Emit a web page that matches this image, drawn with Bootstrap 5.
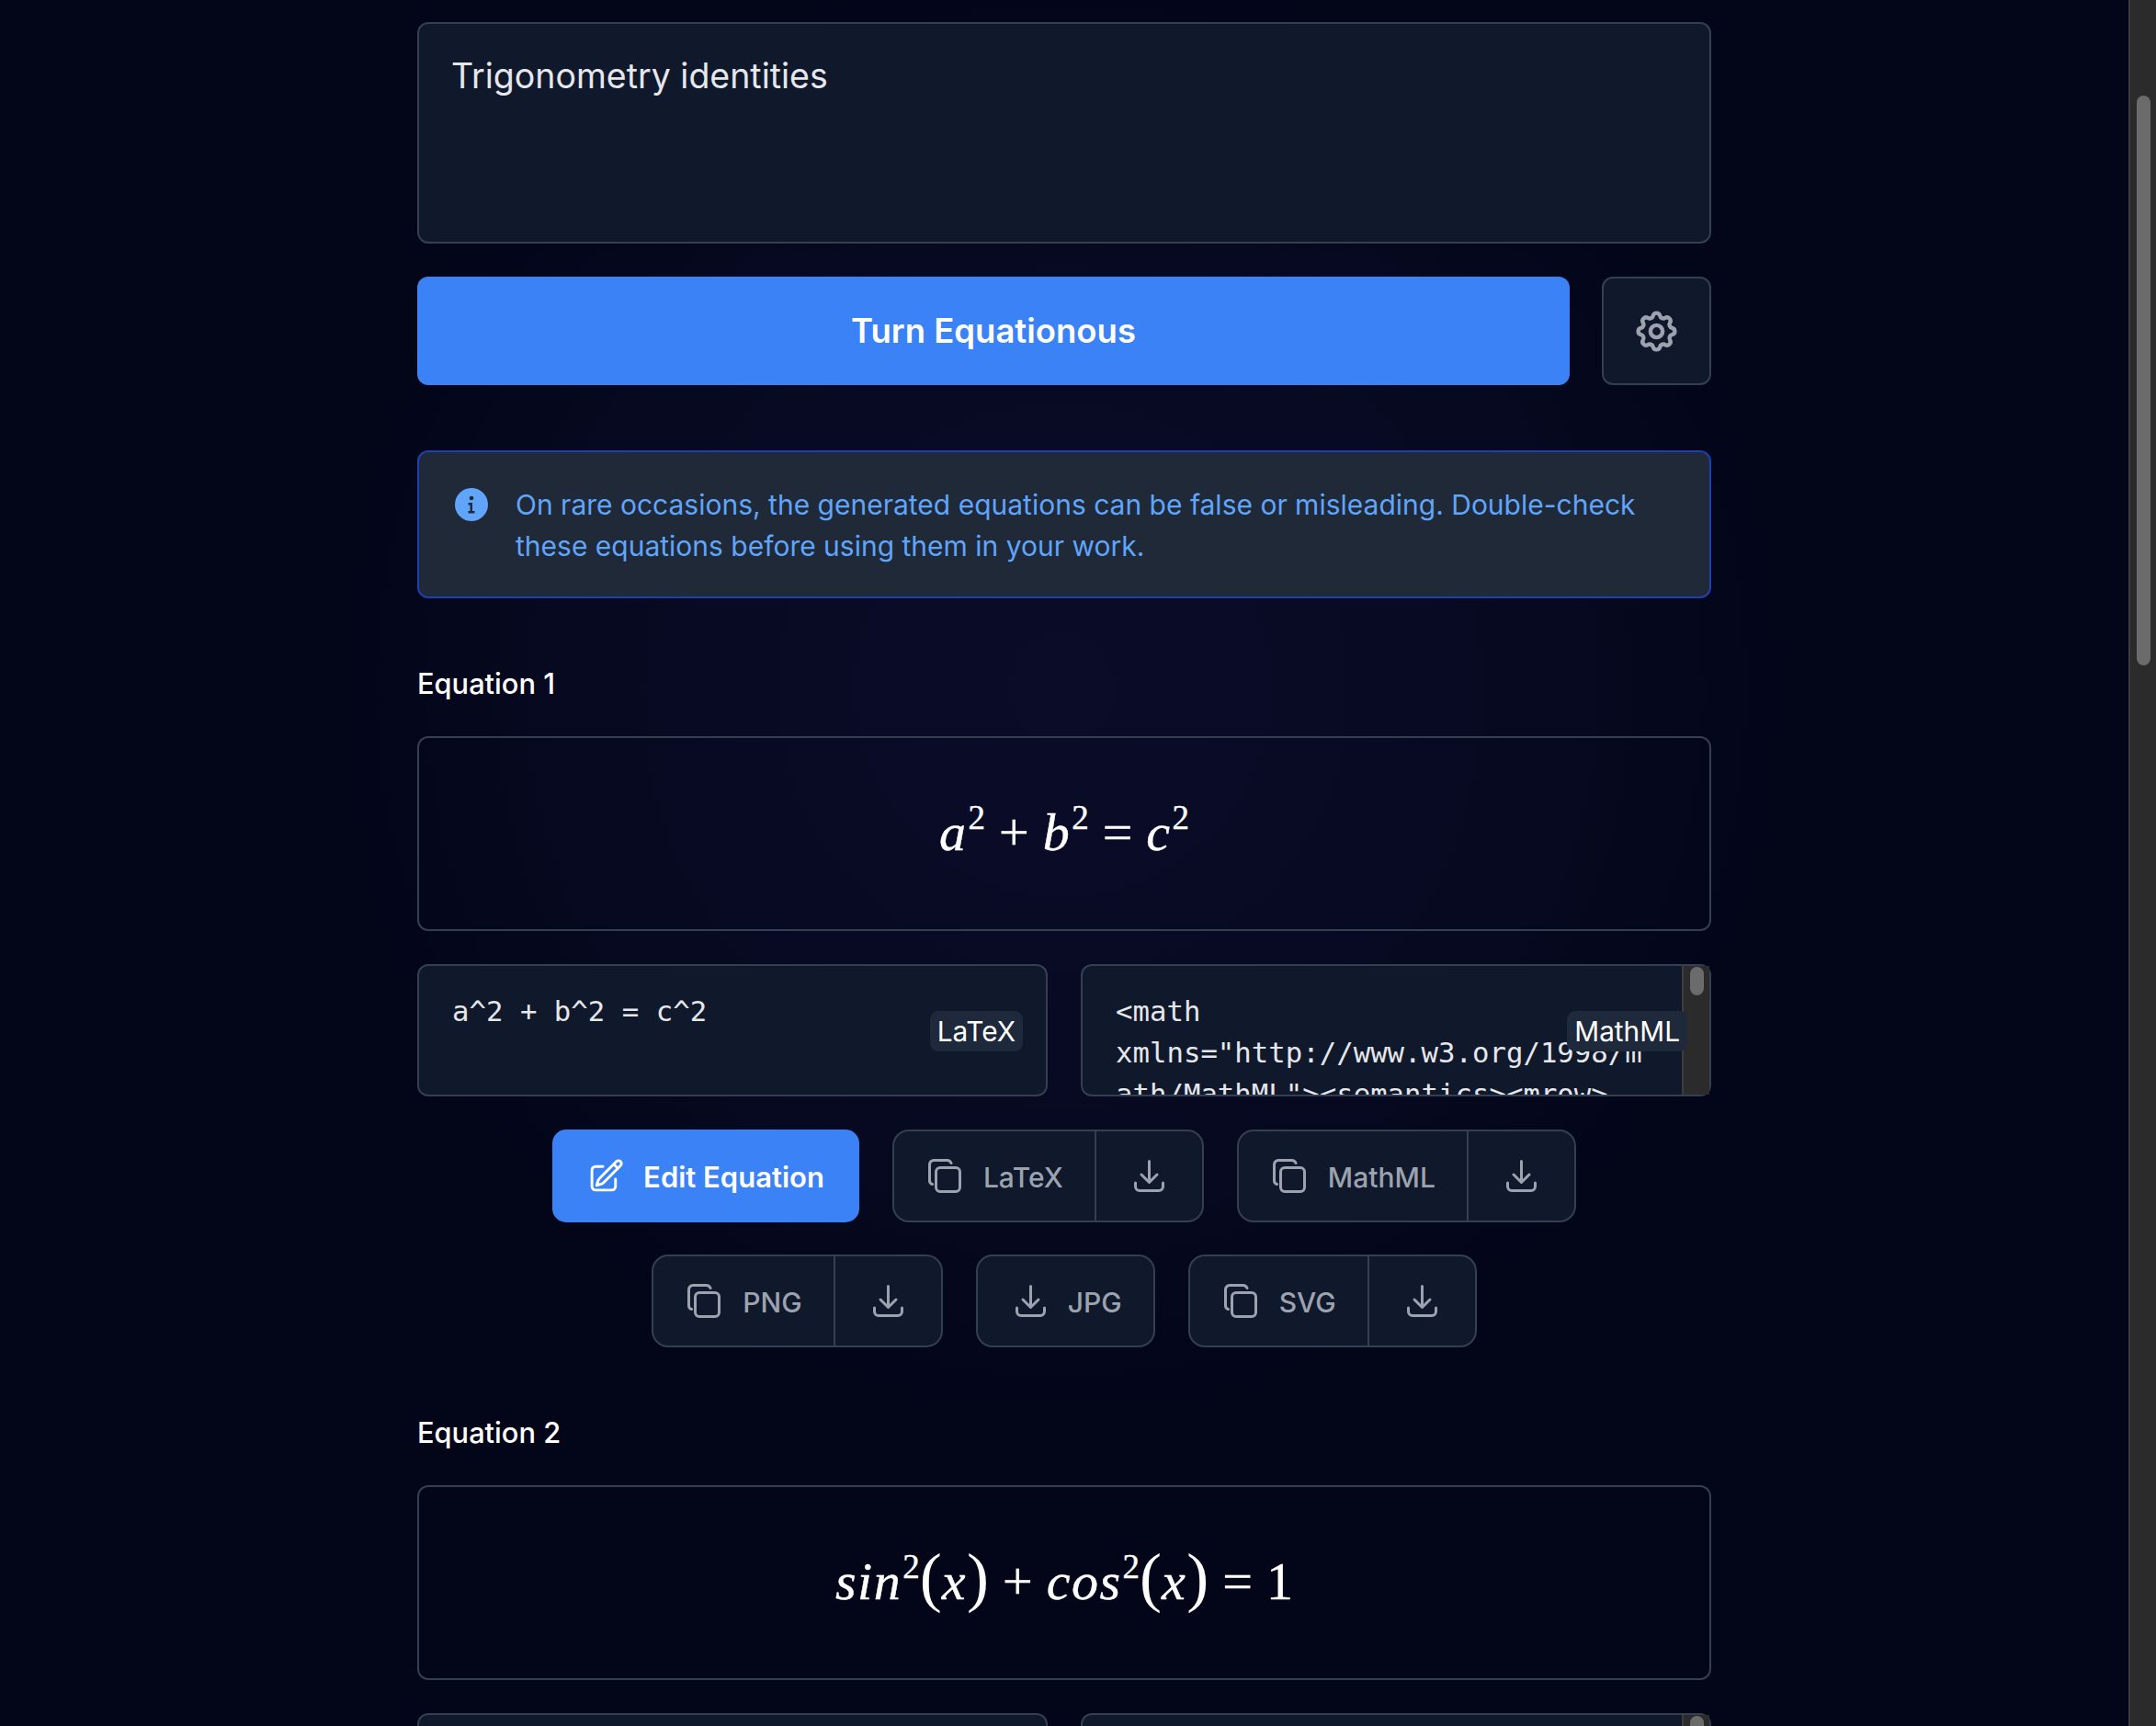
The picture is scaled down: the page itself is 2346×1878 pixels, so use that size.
<!DOCTYPE html>
<html lang="en">
<head>
  <meta charset="UTF-8" />
  <meta name="viewport" content="width=device-width, initial-scale=1.0" />
  <title>Equationous</title>
  <link href="https://cdn.jsdelivr.net/npm/bootstrap@5.3.0/dist/css/bootstrap.min.css" rel="stylesheet">
  <style>
    html, body { height: 1878px; overflow: hidden; }
    body {
      font-family: Inter, "Liberation Sans", sans-serif;
      background: radial-gradient(ellipse 800px 800px at 1157px 750px, #0b0c28 0%, #080a23 50%, #030619 100%), #030619;
      color: #fff;
    }
    .page-col { width: 1408px; padding-top: 24px; }
    .page-rail { width: 30px; background: #2b2b2b; border-left: 2px solid #3d3d3d; padding: 104px 6px 0 7px; flex: none; }
    .page-thumb { height: 620px; background: #6b6b6b; border-radius: 8px; }

    .prompt-box.form-control {
      height: 241px; padding: 34px 35px; resize: none; font-size: 37.5px; line-height: 45px;
      background: #10182b; border: 2px solid #343f50; border-radius: 12px; color: #e5e7eb; box-shadow: none;
    }
    .action-row { gap: 35px; margin-top: 36px; }
    .turn-btn.btn { height: 118px; font-size: 36.5px; font-weight: 600; border-radius: 12px; background: #3b82f6; border: 0; color: #fff; }
    .gear-btn.btn { width: 119px; height: 118px; padding: 0; background: #10182b; border: 2px solid #343f50; border-radius: 12px; color: #9ca3af; }
    .gear-btn svg { width: 53px; height: 53px; }

    .notice.alert {
      margin: 71px 0 0; padding: 35px 36px 32px; gap: 27px; font-size: 30px; line-height: 45px;
      background: #1f2937; border: 2px solid #1e40af; border-radius: 12px; color: #60a5fa;
    }
    .notice svg { width: 42px; height: 42px; flex: none; margin-top: 1px; }

    .eq-label { margin: 72px 0 36px; font-size: 30.8px; line-height: 42px; font-weight: 500; color: #fff; }
    .math-box { height: 212px; padding-bottom: 3px; border: 2px solid #343f50; border-radius: 12px; }
    .math-line { font-family: "Liberation Serif", serif; font-size: 58px; line-height: 1; white-space: nowrap; -webkit-text-stroke: .4px #fff; }
    .math-line i { font-style: italic; letter-spacing: 1.5px; }
    .math-line sup { font-size: 37px; top: -.62em; line-height: 0; font-style: normal; margin-left: 1px; }
    .math-op { margin: 0 15px; }
    .math-paren { font-size: 72px; font-weight: 300; line-height: 0; -webkit-text-stroke: 0; }

    .code-row { gap: 36px; margin-top: 36px; }
    .code-cell { width: 686px; height: 144px; flex: none; }
    .code-box.form-control {
      height: 144px; padding: 27px 36px 0; resize: none; overflow: hidden;
      font-family: "DejaVu Sans Mono", "Liberation Mono", monospace; font-size: 30.7px; line-height: 45px;
      background: #10182b; border: 2px solid #343f50; border-radius: 12px; color: #e5e7eb; box-shadow: none;
    }
    /* textarea scrollbars don't paint in the headless shot, so the track is drawn */
    .code-rail {
      position: absolute; top: 2px; right: 2px; bottom: 2px; width: 30px; padding: 1px 6px 0 7px;
      background: #2b2b2b; border-left: 2px solid #3d3d3d;
    }
    .code-thumb { height: 31px; background: #6b6b6b; border-radius: 8px; }
    .code-tag {
      position: absolute; top: 51px; right: 27px; height: 44px; padding: 0 8px; line-height: 44px;
      font-size: 29.8px; color: #fff; background: #1e293b; border-radius: 9px;
    }
    .code-tag.tag-math { right: 26px; }

    .tool-row { gap: 36px; margin-top: 36px; }
    .tool-row + .tool-row { margin-top: 35px; }
    .tool-btn.btn {
      display: flex; align-items: center; gap: 24px; height: 101px; padding: 0 34px 0 37px;
      font-size: 30px; font-weight: 500; color: #9ca3af; background: #10182b; border: 2px solid #343f50;
      border-radius: 18px;
    }
    .btn-group > .tool-btn.btn:not(:first-child) { margin-left: -2px; }
    .tool-btn.tray-only { padding: 0 41px; }
    .tool-btn.tray-text { padding: 0 34px 0 41px; }
    .tool-btn span { padding-top: 3px; }
    .edit-btn.btn {
      display: flex; align-items: center; gap: 20px; height: 101px; padding: 0 38px;
      font-size: 31px; font-weight: 600; color: #fff; background: #3b82f6; border: 0; border-radius: 15px;
    }
    .edit-btn svg { width: 41px; height: 41px; }
    .edit-btn span { padding-top: 4px; }
    .copy-ico { width: 36px; height: 37px; flex: none; }
    .tray-ico { width: 33px; height: 35px; flex: none; }
  </style>
</head>
<body class="d-flex">

  <svg class="d-none">
    <symbol id="ico-copy" viewBox="0 0 36 37" fill="none" stroke="currentColor" stroke-width="3" stroke-linecap="round" stroke-linejoin="round">
      <rect x="8.5" y="9.5" width="26" height="26" rx="4.5"/>
      <path d="M4.5 27.5C2.6 27 1.5 25.5 1.5 23.5V6A4.5 4.5 0 0 1 6 1.5H20.5C22.6 1.5 24.2 2.6 25 4.5"/>
    </symbol>
    <symbol id="ico-tray" viewBox="0 0 33 35" fill="none" stroke="currentColor" stroke-width="3" stroke-linecap="round" stroke-linejoin="round">
      <path d="M16.5 1.5V24M8 16l8.5 8.500L25 16M1.500 25v4a4.500 4.500 0 0 0 4.500 4.500h21a4.500 4.500 0 0 0 4.500-4.500v-4"/>
    </symbol>
  </svg>

  <div class="flex-grow-1 d-flex justify-content-center">
    <div class="page-col">

      <textarea class="form-control prompt-box">Trigonometry identities</textarea>

      <div class="d-flex action-row">
        <button type="button" class="btn flex-grow-1 turn-btn">Turn Equationous</button>
        <button type="button" class="btn d-flex align-items-center justify-content-center gear-btn" aria-label="Settings">
          <svg viewBox="0 0 24 24" fill="none" stroke="currentColor" stroke-width="2" stroke-linecap="round" stroke-linejoin="round"><path d="M10.325 4.317c.426-1.756 2.924-1.756 3.35 0a1.724 1.724 0 002.573 1.066c1.543-.94 3.31.826 2.37 2.37a1.724 1.724 0 001.065 2.572c1.756.426 1.756 2.924 0 3.35a1.724 1.724 0 00-1.066 2.573c.94 1.543-.826 3.31-2.37 2.37a1.724 1.724 0 00-2.572 1.065c-.426 1.756-2.924 1.756-3.35 0a1.724 1.724 0 00-2.573-1.066c-1.543.94-3.31-.826-2.37-2.370a1.724 1.724 0 00-1.065-2.572c-1.756-.426-1.756-2.924 0-3.350a1.724 1.724 0 001.066-2.573c-.94-1.543.826-3.310 2.370-2.370.996.608 2.296.070 2.572-1.065z"/><path d="M15 12a3 3 0 11-6 0 3 3 0 016 0z"/></svg>
        </button>
      </div>

      <div class="alert d-flex notice" role="alert">
        <svg viewBox="0 0 42 42"><circle cx="21" cy="21" r="18" fill="#60a5fa"/><circle cx="21" cy="14" r="2.300" fill="#1f2937"/><path d="M17.500 19h4.500v9h2.500v2.500h-7V28h2V21.500h-2z" fill="#1f2937"/></svg>
        <div>On rare occasions, the generated equations can be false or misleading. Double-check these equations before using them in your work.</div>
      </div>

      <div class="eq-label">Equation 1</div>
      <div class="d-flex align-items-center justify-content-center math-box">
        <div class="math-line"><i>a</i><sup>2</sup><span class="math-op">+</span><i>b</i><sup>2</sup><span class="math-op">=</span><i>c</i><sup>2</sup></div>
      </div>

      <div class="d-flex code-row">
        <div class="position-relative code-cell">
          <textarea class="form-control code-box" readonly>a^2 + b^2 = c^2</textarea>
          <span class="code-tag">LaTeX</span>
        </div>
        <div class="position-relative code-cell">
          <textarea class="form-control code-box" readonly>&lt;math
xmlns="http://www.w3.org/1998/m
ath/MathML"&gt;&lt;semantics&gt;&lt;mrow&gt;
&lt;msup&gt;&lt;mi&gt;a&lt;/mi&gt;&lt;mn&gt;2&lt;/mn&gt;
&lt;/msup&gt;&lt;mo&gt;+&lt;/mo&gt;&lt;msup&gt;
&lt;mi&gt;b&lt;/mi&gt;&lt;mn&gt;2&lt;/mn&gt;
&lt;/msup&gt;&lt;mo&gt;=&lt;/mo&gt;&lt;msup&gt;
&lt;mi&gt;c&lt;/mi&gt;&lt;mn&gt;2&lt;/mn&gt;
&lt;/msup&gt;&lt;/mrow&gt;&lt;/semantics&gt;
&lt;/math&gt;</textarea>
          <div class="code-rail"><div class="code-thumb"></div></div>
          <span class="code-tag tag-math">MathML</span>
        </div>
      </div>

      <div class="d-flex justify-content-center tool-row">
        <button type="button" class="btn edit-btn">
          <svg viewBox="0 0 24 24" fill="none" stroke="currentColor" stroke-width="1.7" stroke-linecap="round" stroke-linejoin="round"><path d="M16.862 4.487l1.687-1.688a1.875 1.875 0 112.652 2.652L10.582 16.070a4.500 4.500 0 01-1.897 1.130L6 18l.8-2.685a4.500 4.500 0 011.130-1.897l8.932-8.931zm0 0L19.500 7.125M18 14v4.750A2.250 2.250 0 0115.750 21H5.250A2.250 2.250 0 013 18.750V8.250A2.250 2.250 0 015.250 6H10"/></svg>
          <span>Edit Equation</span>
        </button>
        <div class="btn-group">
          <button type="button" class="btn tool-btn"><svg class="copy-ico"><use href="#ico-copy"/></svg><span>LaTeX</span></button>
          <button type="button" class="btn tool-btn tray-only" aria-label="Download LaTeX"><svg class="tray-ico"><use href="#ico-tray"/></svg></button>
        </div>
        <div class="btn-group">
          <button type="button" class="btn tool-btn"><svg class="copy-ico"><use href="#ico-copy"/></svg><span>MathML</span></button>
          <button type="button" class="btn tool-btn tray-only" aria-label="Download MathML"><svg class="tray-ico"><use href="#ico-tray"/></svg></button>
        </div>
      </div>

      <div class="d-flex justify-content-center tool-row">
        <div class="btn-group">
          <button type="button" class="btn tool-btn"><svg class="copy-ico"><use href="#ico-copy"/></svg><span>PNG</span></button>
          <button type="button" class="btn tool-btn tray-only" aria-label="Download PNG"><svg class="tray-ico"><use href="#ico-tray"/></svg></button>
        </div>
        <button type="button" class="btn tool-btn tray-text"><svg class="tray-ico"><use href="#ico-tray"/></svg><span>JPG</span></button>
        <div class="btn-group">
          <button type="button" class="btn tool-btn"><svg class="copy-ico"><use href="#ico-copy"/></svg><span>SVG</span></button>
          <button type="button" class="btn tool-btn tray-only" aria-label="Download SVG"><svg class="tray-ico"><use href="#ico-tray"/></svg></button>
        </div>
      </div>

      <div class="eq-label">Equation 2</div>
      <div class="d-flex align-items-center justify-content-center math-box">
        <div class="math-line"><i>sin</i><sup>2</sup><span class="math-paren">(</span><i>x</i><span class="math-paren">)</span><span class="math-op">+</span><i>cos</i><sup>2</sup><span class="math-paren">(</span><i>x</i><span class="math-paren">)</span><span class="math-op">=</span>1</div>
      </div>

      <div class="d-flex code-row">
        <div class="position-relative code-cell">
          <textarea class="form-control code-box" readonly>sin^2(x) + cos^2(x) = 1</textarea>
        </div>
        <div class="position-relative code-cell">
          <textarea class="form-control code-box" readonly>&lt;math
xmlns="http://www.w3.org/1998/m
ath/MathML"&gt;&lt;semantics&gt;&lt;mrow&gt;</textarea>
          <div class="code-rail"><div class="code-thumb"></div></div>
        </div>
      </div>

    </div>
  </div>

  <div class="page-rail">
    <div class="page-thumb"></div>
  </div>

  <script src="https://cdn.jsdelivr.net/npm/bootstrap@5.3.0/dist/js/bootstrap.bundle.min.js"></script>
</body>
</html>
